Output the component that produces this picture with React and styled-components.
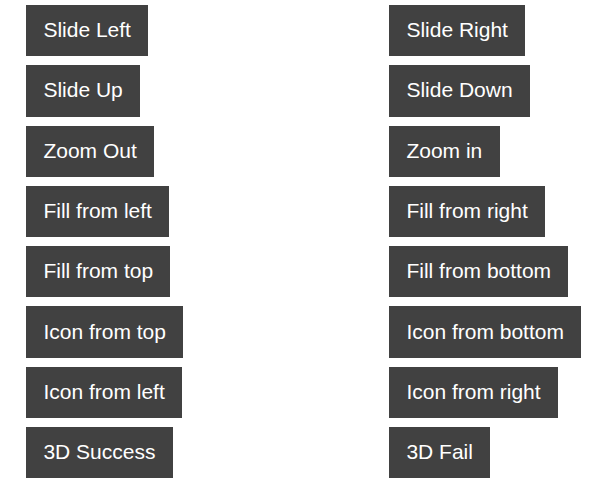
import React from "react";
import styled, { createGlobalStyle } from "styled-components";

const Global = createGlobalStyle`
  html, body { margin: 0; padding: 0; background: #ffffff; }
  body { font-family: "Liberation Sans", Arial, sans-serif; }
`;

const Grid = styled.div`
  display: grid;
  grid-template-columns: 363px auto;
  row-gap: 9px;
  padding: 5px 0 0 26px;
  justify-items: start;
`;

const Button = styled.button`
  display: inline-flex;
  align-items: center;
  height: 51.3px;
  padding: 0 17.4px 2px;
  margin: 0;
  border: none;
  background: #414141;
  color: #ffffff;
  font-family: "Liberation Sans", Arial, sans-serif;
  font-size: 21px;
  line-height: 1;
  cursor: pointer;
  white-space: nowrap;
`;

const labels = [
  ["Slide Left", "Slide Right"],
  ["Slide Up", "Slide Down"],
  ["Zoom Out", "Zoom in"],
  ["Fill from left", "Fill from right"],
  ["Fill from top", "Fill from bottom"],
  ["Icon from top", "Icon from bottom"],
  ["Icon from left", "Icon from right"],
  ["3D Success", "3D Fail"],
];

export default function App() {
  return (
    <>
      <Global />
      <Grid>
        {labels.flat().map((l) => (
          <Button key={l}>{l}</Button>
        ))}
      </Grid>
    </>
  );
}
